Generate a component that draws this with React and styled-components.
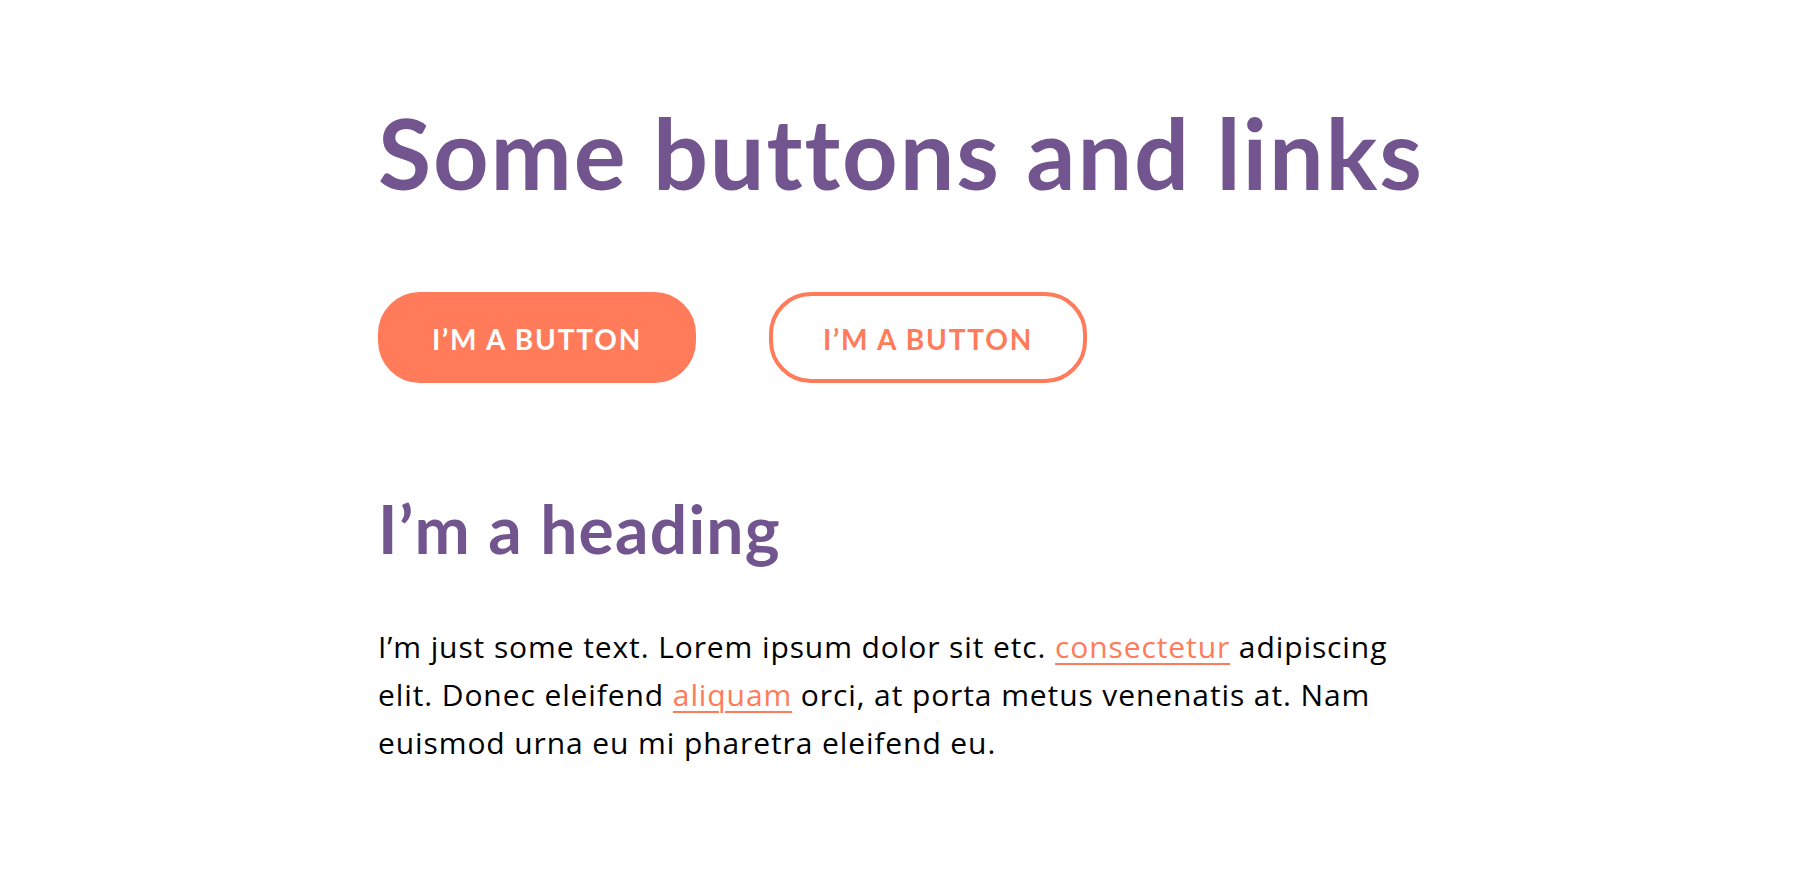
import React from "react";
import styled, { createGlobalStyle } from "styled-components";

const purple = "#72548f";
const coral = "#ff7b5a";

const GlobalStyle = createGlobalStyle`
  body {
    margin: 0;
    background: #fff;
    font-family: Lato, "Open Sans", sans-serif;
    color: #000;
  }
`;

const Page = styled.main`
  width: 1044px;
  padding: 100px 0 0 378px;
`;

const Title = styled.h1`
  margin: 0;
  font-size: 97px;
  line-height: 1.1;
  font-weight: 700;
  letter-spacing: 1.9px;
  white-space: nowrap;
  color: ${purple};
`;

const ButtonRow = styled.div`
  display: flex;
  gap: 73px;
  margin-top: 85px;
`;

const Button = styled.button`
  width: 318px;
  height: 91px;
  padding: 4px 0 0;
  border-radius: 42px;
  border: 4px solid ${coral};
  background: ${(p) => (p.$outline ? "#fff" : coral)};
  color: ${(p) => (p.$outline ? coral : "#fff")};
  font-family: inherit;
  font-size: 28px;
  font-weight: 700;
  letter-spacing: 1.8px;
  text-transform: uppercase;
  cursor: pointer;
`;

const Heading = styled.h2`
  margin: 106px 0 0;
  font-size: 66px;
  line-height: 1.2;
  font-weight: 700;
  letter-spacing: 1.2px;
  color: ${purple};
`;

const Text = styled.p`
  margin: 55px 0 0;
  font-family: "Open Sans", Lato, sans-serif;
  font-size: 30px;
  line-height: 48px;
  letter-spacing: 0.9px;
`;

const Link = styled.a`
  color: ${coral};
  text-decoration: underline;
  text-underline-offset: 5px;
  text-decoration-thickness: 2px;
`;

export default function App() {
  return (
    <>
      <GlobalStyle />
      <Page>
        <Title>Some buttons and links</Title>
        <ButtonRow>
          <Button>I’m a button</Button>
          <Button $outline>I’m a button</Button>
        </ButtonRow>
        <Heading>I’m a heading</Heading>
        <Text>
          I’m just some text. Lorem ipsum dolor sit etc.{" "}
          <Link href="#">consectetur</Link> adipiscing elit. Donec eleifend{" "}
          <Link href="#">aliquam</Link> orci, at porta metus venenatis at. Nam
          euismod urna eu mi pharetra eleifend eu.
        </Text>
      </Page>
    </>
  );
}
